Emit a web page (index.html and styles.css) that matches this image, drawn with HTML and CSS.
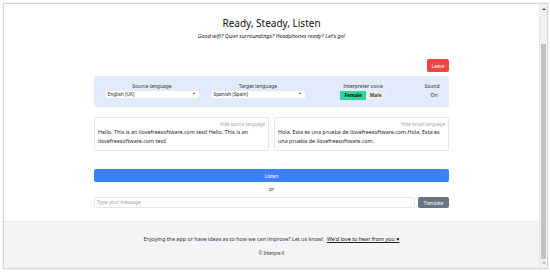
FILE: index.html
```
<!doctype html>
<html lang="en">
<head>
	<meta charset="UTF-8">
	<title>Interpre-X</title>
	<link rel="stylesheet" href="styles.css">
</head>
<body>
	<div class="window">
		<div class="page">
			<main class="main">
				<header class="intro">
					<h1>Ready, Steady, Listen</h1>
					<p>Good wifi? Quiet surroundings? Headphones ready? Let's go!</p>
				</header>

				<div class="leave-row">
					<button class="btn btn-leave">Leave</button>
				</div>

				<section class="settings">
					<div class="setting">
						<label>Source language</label>
						<div class="select">English (UK)<span class="chev">&#8964;</span></div>
					</div>
					<div class="setting">
						<label>Target language</label>
						<div class="select">Spanish (Spain)<span class="chev">&#8964;</span></div>
					</div>
					<div class="setting">
						<label>Interpreter voice</label>
						<div class="voice">
							<span class="voice-opt active">Female</span>
							<span class="voice-opt">Male</span>
						</div>
					</div>
					<div class="setting">
						<label>Sound</label>
						<span class="sound-state">On</span>
					</div>
				</section>

				<section class="texts">
					<div class="card">
						<span class="hide-link">Hide source language</span>
						<p>Hello. This is an ilovefreesoftware.com test! Hello. This is an ilovefreesoftware.com test!</p>
					</div>
					<div class="card">
						<span class="hide-link">Hide target language</span>
						<p>Hola. Esta es una prueba de ilovefreesoftware.com.Hola. Esta es una prueba de ilovefreesoftware.com.</p>
					</div>
				</section>

				<button class="btn btn-listen">Listen</button>
				<div class="or">or</div>
				<div class="message-row">
					<div class="message-input">Type your message</div>
					<button class="btn btn-translate">Translate</button>
				</div>
			</main>

			<footer class="footer">
				<p>Enjoying the app or have ideas as to how we can improve? Let us know! <a href="#">We'd love to hear from you &#9829;</a></p>
				<p class="copy">&copy; Interpre-X</p>
			</footer>
		</div>

		<div class="scrollbar">
			<span class="arrow up"></span>
			<span class="thumb"></span>
			<span class="arrow down"></span>
		</div>
	</div>
</body>
</html>
```
FILE: styles.css
```
* {
	box-sizing: border-box;
	margin: 0;
	padding: 0;
}

body {
	background: #ffffff;
	font-family: "Noto Sans", "Open Sans", sans-serif;
	color: #1f2937;
	width: 550px;
	height: 272px;
	overflow: hidden;
}

.window {
	margin: 3px 2px 3px 3px;
	height: 266px;
	border: 1px solid #d6d6d6;
	box-shadow: 0 0 2px rgba(0, 0, 0, 0.15);
	display: flex;
	background: #ffffff;
}

.page {
	flex: 1;
	display: flex;
	flex-direction: column;
	overflow: hidden;
}

.main {
	width: 355px;
	margin: 0 auto;
	flex: 1;
}

/* heading */
.intro {
	text-align: center;
	padding-top: 13px;
}

.intro h1 {
	font-size: 10px;
	font-weight: 400;
	line-height: 13px;
	color: #111111;
}

.intro p {
	font-size: 5.5px;
	font-style: italic;
	line-height: 8px;
	margin-top: 2px;
	color: #222222;
}

button {
	font-family: inherit;
	border: 0;
	cursor: pointer;
}

.btn {
	color: #ffffff;
	border-radius: 2px;
}

.leave-row {
	display: flex;
	justify-content: flex-end;
	margin-top: 19px;
}

.btn-leave {
	background: #ef4444;
	width: 22px;
	height: 13px;
	font-size: 4.6px;
}

/* settings panel */
.settings {
	margin-top: 4px;
	background: #e2eafb;
	border-radius: 2px;
	height: 31px;
	padding: 7px 0 0 5px;
	display: grid;
	grid-template-columns: 106px 106px 104px 1fr;
}

.setting {
	display: flex;
	flex-direction: column;
	align-items: center;
	font-size: 5px;
	color: #333333;
}

.setting label {
	line-height: 6px;
	height: 8px;
}

.select {
	width: 93px;
	height: 7px;
	background: #ffffff;
	border-radius: 1px;
	font-size: 4.8px;
	line-height: 7px;
	padding-left: 2px;
	position: relative;
	color: #222222;
}

.chev {
	position: absolute;
	right: 3px;
	top: -2px;
	font-size: 5px;
	font-weight: 700;
}

.voice {
	display: flex;
}

.voice-opt {
	font-size: 4.8px;
	font-weight: 700;
	height: 9px;
	line-height: 9px;
	padding: 0 4px;
	background: #eeeeee;
	color: #444444;
}

.voice-opt.active {
	background: #34d399;
	color: #0a0a0a;
}

.sound-state {
	font-size: 5px;
	line-height: 9px;
	margin-left: 4px;
}

/* text cards */
.texts {
	margin-top: 10px;
	display: grid;
	grid-template-columns: 1fr 1fr;
	gap: 5px;
}

.card {
	border: 1px solid #e5e7eb;
	border-radius: 2px;
	height: 34px;
	padding: 3px 3px 0 3px;
	display: flex;
	flex-direction: column;
}

.hide-link {
	align-self: flex-end;
	font-size: 4.4px;
	color: #9ca3af;
	line-height: 7px;
}

.card p {
	font-size: 5.4px;
	line-height: 9px;
	color: #1f1f1f;
}

/* listen + message */
.btn-listen {
	display: block;
	width: 100%;
	height: 13px;
	margin-top: 18px;
	background: #3b82f6;
	font-size: 4.8px;
}

.or {
	text-align: center;
	font-size: 5.4px;
	line-height: 7px;
	margin-top: 4px;
	color: #333333;
}

.message-row {
	display: flex;
	gap: 3px;
	margin-top: 4px;
}

.message-input {
	flex: 1;
	height: 11px;
	border: 1px solid #e5e7eb;
	border-radius: 2px;
	font-size: 4.8px;
	line-height: 9px;
	padding-left: 2px;
	color: #9ca3af;
}

.btn-translate {
	width: 31px;
	height: 11px;
	background: #6b7280;
	font-size: 4.6px;
}

/* footer */
.footer {
	background: #f3f4f6;
	border-top: 1px solid #e9eaec;
	height: 47px;
	text-align: center;
	padding-top: 14px;
	font-size: 5.4px;
	color: #333333;
}

.footer p {
	line-height: 7px;
}

.footer a {
	color: #222222;
	text-decoration: underline;
	margin-left: 2px;
}

.footer .copy {
	margin-top: 7px;
	font-size: 4.4px;
}

/* fake scrollbar */
.scrollbar {
	width: 8px;
	background: #f1f1f1;
	border-left: 1px solid #e8e8e8;
	display: flex;
	flex-direction: column;
	align-items: center;
	padding: 2px 0;
}

.thumb {
	width: 5px;
	flex: 1;
	margin: 34px 0 3px 0;
	background: #c1c1c1;
}

.arrow {
	width: 0;
	height: 0;
	border-left: 2px solid transparent;
	border-right: 2px solid transparent;
}

.arrow.up {
	border-bottom: 2px solid #505050;
	margin-top: 2px;
}

.arrow.down {
	border-top: 2px solid #a3a3a3;
	margin-bottom: 2px;
}
```
